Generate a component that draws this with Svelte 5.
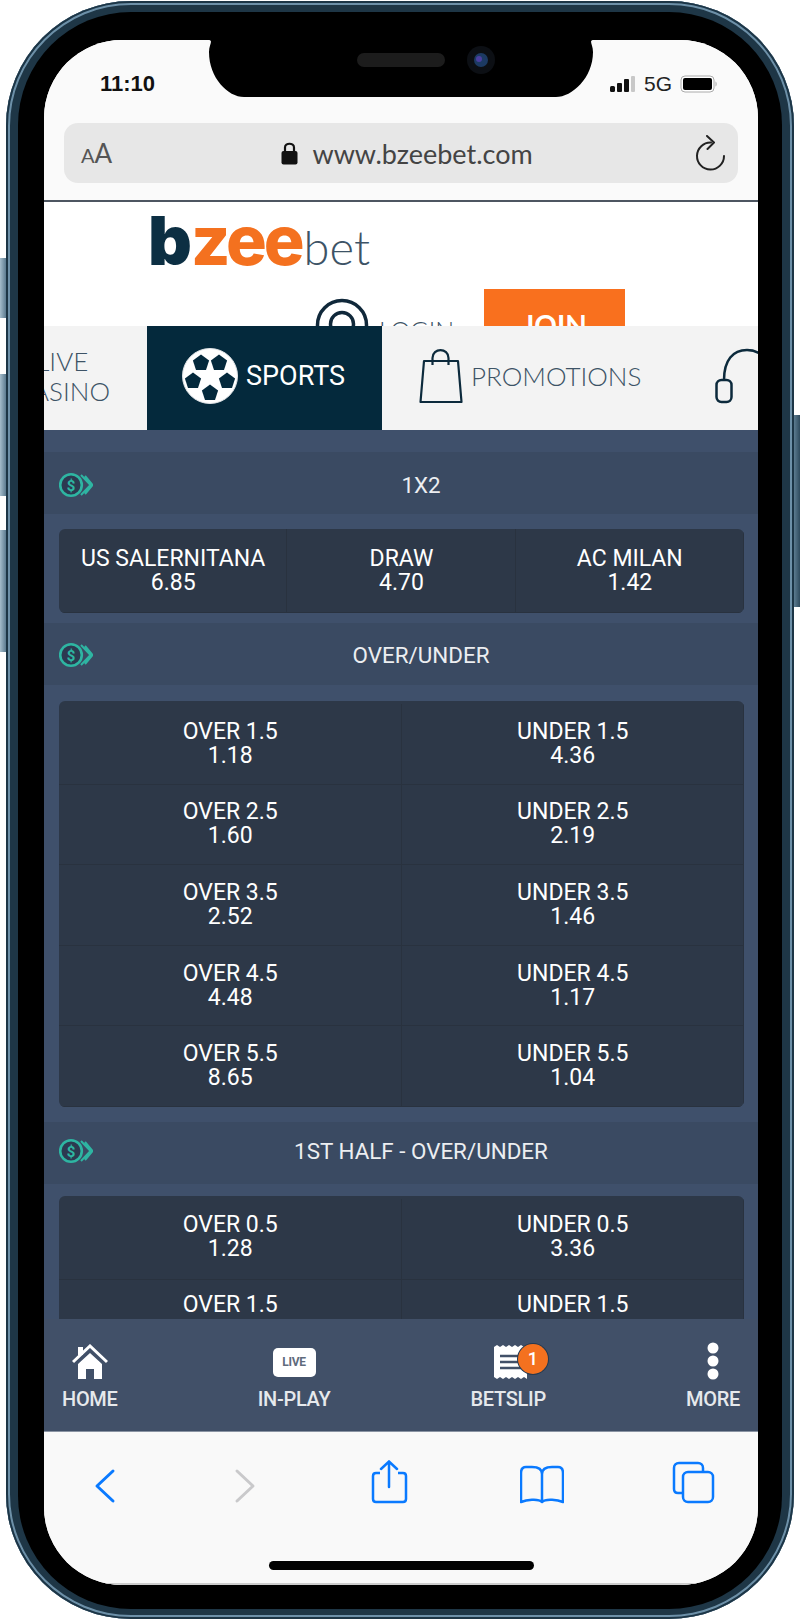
<script>
  const sections = [
    {
      title: "1X2",
      cols: 3,
      picks: [
        ["US SALERNITANA", "6.85"],
        ["DRAW", "4.70"],
        ["AC MILAN", "1.42"],
      ],
    },
    {
      title: "OVER/UNDER",
      cols: 2,
      picks: [
        ["OVER 1.5", "1.18"], ["UNDER 1.5", "4.36"],
        ["OVER 2.5", "1.60"], ["UNDER 2.5", "2.19"],
        ["OVER 3.5", "2.52"], ["UNDER 3.5", "1.46"],
        ["OVER 4.5", "4.48"], ["UNDER 4.5", "1.17"],
        ["OVER 5.5", "8.65"], ["UNDER 5.5", "1.04"],
      ],
    },
    {
      title: "1ST HALF - OVER/UNDER",
      cols: 2,
      picks: [
        ["OVER 0.5", "1.28"], ["UNDER 0.5", "3.36"],
        ["OVER 1.5", "2.05"], ["UNDER 1.5", "1.72"],
      ],
    },
  ];

  // football patches, relative to the ball centre
  const patches = [[-9, -13], [9, -13], [-17, 5], [17, 5], [0, 17]];

  function pentagon(cx, cy, r) {
    const pts = [];
    for (let i = 0; i < 5; i++) {
      const a = (-90 + i * 72) * Math.PI / 180;
      pts.push((cx + r * Math.cos(a)).toFixed(1) + "," + (cy + r * Math.sin(a)).toFixed(1));
    }
    return pts.join(" ");
  }
</script>

<div class="phone">
  <span class="side vol-mute"></span>
  <span class="side vol-up"></span>
  <span class="side vol-down"></span>
  <span class="side power"></span>

  <div class="bezel">
    <div class="screen">
      <svg class="notch" width="386" height="57" viewBox="0 0 386 57">
        <path d="M0 0H386C380 0 385 4 385 12C385 38 364 57 348 57H36C20 57 1 38 1 12C1 4 6 0 0 0Z" fill="#000" />
        <rect x="149" y="13" width="88" height="14" rx="7" fill="#1c1c1c" />
        <circle cx="273" cy="20" r="14" fill="#0c0f14" />
        <circle cx="273" cy="20" r="7" fill="#1c3a63" />
        <circle cx="271" cy="19" r="3" fill="#4a3fa0" />
      </svg>

      <div class="browser-top">
        <div class="status">
          <span class="time">11:10</span>
          <div class="status-right">
            <svg width="26" height="17" viewBox="0 0 26 17">
              <rect x="0" y="10" width="5" height="6" rx="1.5" fill="#111" />
              <rect x="7" y="7" width="5" height="9" rx="1" fill="#111" />
              <rect x="14" y="3" width="5" height="13" rx="1" fill="#111" />
              <rect x="21" y="0" width="4" height="16" rx="1" fill="#c8c8c8" />
            </svg>
            <span class="net">5G</span>
            <svg width="38" height="18" viewBox="0 0 38 18">
              <rect x="1" y="1" width="33" height="16" rx="4" fill="#fff" stroke="#aaa" />
              <rect x="3" y="3" width="29" height="12" rx="2" fill="#000" />
              <path d="M35.5 6.5C37 7 37 11 35.5 11.500Z" fill="#aaa" />
            </svg>
          </div>
        </div>
        <div class="urlbar">
          <span class="aa"><small>A</small>A</span>
          <div class="url">
            <svg width="17" height="24" viewBox="0 0 17 24">
              <path d="M4 11V6.500C4 1.500 13 1.500 13 6.500V11" fill="none" stroke="#111" stroke-width="2.200" />
              <rect x="0.500" y="10" width="16" height="13.500" rx="2" fill="#111" />
            </svg>
            <span>www.bzeebet.com</span>
          </div>
          <svg class="reload" width="32" height="38" viewBox="0 0 32 38">
            <path d="M17 7.500A13.500 13.500 0 1 0 30 21" fill="none" stroke="#222" stroke-width="2" stroke-linecap="round" />
            <path d="M13 1L20 7.500L13.500 14" fill="none" stroke="#222" stroke-width="2" stroke-linecap="round" stroke-linejoin="round" />
          </svg>
        </div>
      </div>

      <header class="site">
        <div class="logo"><b>b</b><em>zee</em><i>bet</i></div>
        <div class="actions">
          <svg class="user" width="54" height="54" viewBox="0 0 54 54">
            <circle cx="27" cy="27" r="24.500" fill="none" stroke="#10283a" stroke-width="3.500" />
            <circle cx="27" cy="26" r="11.500" fill="none" stroke="#10283a" stroke-width="3.500" />
          </svg>
          <span class="login">LOGIN</span>
          <span class="join">JOIN</span>
        </div>
      </header>

      <nav class="tabs">
        <div class="tab casino"><span>LIVE<br />CASINO</span></div>
        <div class="tab active">
          <svg width="58" height="58" viewBox="-29 -29 58 58">
            <circle r="27.500" fill="#fff" stroke="#dfe3e6" />
            {#each patches as p}
              <polygon points={pentagon(p[0], p[1], 8.500)} fill="#04293c" />
            {/each}
          </svg>
          <span>SPORTS</span>
        </div>
        <div class="tab promo">
          <svg width="44" height="56" viewBox="0 0 44 56">
            <path d="M5 13H39L42.500 54H1.500Z" fill="none" stroke="#0c2a3c" stroke-width="2.200" stroke-linejoin="round" />
            <path d="M13.500 17V10C13.500 -0.500 29.500 -0.500 29.500 10V17" fill="none" stroke="#0c2a3c" stroke-width="2.200" />
          </svg>
          <span>PROMOTIONS</span>
        </div>
        <div class="tab help">
          <svg width="60" height="56" viewBox="0 0 60 56">
            <path d="M9 32C9 12 18 2 32 2C46 2 55 12 55 32" fill="none" stroke="#0c2a3c" stroke-width="2.500" />
            <rect x="1.500" y="32" width="15" height="22" rx="5" fill="none" stroke="#0c2a3c" stroke-width="2.500" />
          </svg>
        </div>
      </nav>

      <main class="odds">
        {#each sections as s, i}
          <div class="market-head h{i}">
            <svg width="34" height="26" viewBox="0 0 34 26">
              <path d="M22 3L31.500 13L22 23M26 4L33.500 13L26 22" fill="none" stroke="#2eb5a2" stroke-width="2" />
              <circle cx="12" cy="13" r="10.800" fill="#2c3950" stroke="#2eb5a2" stroke-width="2.600" />
              <text x="12" y="18.500" text-anchor="middle" class="dollar">$</text>
            </svg>
            <span>{s.title}</span>
          </div>
          <div class="market m{i}" class:three={s.cols === 3}>
            {#each s.picks as pick}
              <div class="pick">
                <span>{pick[0]}</span>
                <span>{pick[1]}</span>
              </div>
            {/each}
          </div>
        {/each}
      </main>

      <div class="bottom-nav">
        <div class="item">
          <svg width="36" height="36" viewBox="0 0 36 36">
            <path d="M1 18L18 2L35 18" fill="none" stroke="#fff" stroke-width="3" />
            <path d="M6 20L18 9L30 20V35H22V25H14V35H6Z" fill="#fff" />
            <rect x="6" y="3" width="5" height="8" fill="#fff" />
          </svg>
          <span>HOME</span>
        </div>
        <div class="item">
          <div class="live">LIVE</div>
          <span>IN-PLAY</span>
        </div>
        <div class="item">
          <div class="slip">
            <svg width="36" height="36" viewBox="0 0 36 36">
              <path d="M1 3L4 1L7 3L10 1L13 3L16 1L19 3L22 1L25 3L28 1L31 3L34 1V35L31 33L28 35L25 33L22 35L19 33L16 35L13 33L10 35L7 33L4 35L1 33Z" fill="#fff" />
              <path d="M7 12H28M7 18H28M7 24H28" stroke="#415068" stroke-width="2.500" />
            </svg>
            <span class="badge">1</span>
          </div>
          <span>BETSLIP</span>
        </div>
        <div class="item">
          <svg width="14" height="38" viewBox="0 0 14 38">
            <circle cx="7" cy="6" r="5.500" fill="#fff" />
            <circle cx="7" cy="19" r="5.500" fill="#fff" />
            <circle cx="7" cy="32" r="5.500" fill="#fff" />
          </svg>
          <span>MORE</span>
        </div>
      </div>

      <div class="browser-bottom">
        <div class="tools">
          <svg width="44" height="44" viewBox="0 0 44 44">
            <path d="M30 11L14 26L30 41" fill="none" stroke="#0a7aff" stroke-width="3" stroke-linecap="round" stroke-linejoin="round" />
          </svg>
          <svg width="44" height="44" viewBox="0 0 44 44">
            <path d="M14 11L30 26L14 41" fill="none" stroke="#c9c9cb" stroke-width="3" stroke-linecap="round" stroke-linejoin="round" />
          </svg>
          <svg width="44" height="44" viewBox="0 0 44 44">
            <path d="M13 13H9C7 13 6 14 6 16V39C6 41 7 42 9 42H36C38 42 39 41 39 39V16C39 14 38 13 36 13H31" fill="none" stroke="#0a7aff" stroke-width="2.500" />
            <path d="M22 27V2M14 9L22 1.500L30 9" fill="none" stroke="#0a7aff" stroke-width="2.500" stroke-linecap="round" />
          </svg>
          <svg width="44" height="44" viewBox="0 0 44 44">
            <path d="M22 42C18 38 6 40 1 42V13C1 9 3 7 6 7H12C18 7 22 9 22 14V42C26 38 38 40 43 42V13C43 9 41 7 38 7H32C26 7 22 9 22 14" fill="none" stroke="#0a7aff" stroke-width="2.500" stroke-linejoin="round" />
          </svg>
          <svg width="44" height="44" viewBox="0 0 44 44">
            <rect x="11" y="12" width="30" height="30" rx="5" fill="none" stroke="#0a7aff" stroke-width="2.500" />
            <path d="M11 33H6C3 33 2 31 2 29V8C2 5 4 3 7 3H26C29 3 31 5 31 8V12" fill="none" stroke="#0a7aff" stroke-width="2.500" />
          </svg>
        </div>
        <div class="home-bar"></div>
      </div>
    </div>
  </div>
</div>

<style>
  :global(body) {
    background: #fff;
  }

  .phone {
    position: relative;
    box-sizing: border-box;
    width: 788px;
    height: 1618px;
    margin: 1px 6px;
    padding: 11px 12px 10px;
    border-radius: 125px;
    background: #1e3646;
    box-shadow: inset 0 0 0 2px #1c3546, inset 0 0 0 4px #6d90a8;
  }

  .side {
    position: absolute;
    width: 6px;
    background: linear-gradient(90deg, #a4bccb, #5c7b90);
  }
  .vol-mute { left: -6px; top: 257px; height: 60px; }
  .vol-up { left: -6px; top: 373px; height: 122px; }
  .vol-down { left: -6px; top: 529px; height: 122px; }
  .power { right: -6px; top: 414px; height: 192px; background: linear-gradient(90deg, #5c7b90, #2f4b5e); }

  .bezel {
    box-sizing: border-box;
    height: 100%;
    padding: 28px 24px 24px 26px;
    border-radius: 113px;
    background: #000;
  }

  .screen {
    position: relative;
    display: flex;
    flex-direction: column;
    width: 714px;
    height: 1545px;
    overflow: hidden;
    border-radius: 78px;
    background: #fff;
    font-family: Roboto, sans-serif;
  }

  .notch {
    position: absolute;
    left: 164px;
    top: 0;
    z-index: 3;
  }

  .browser-top {
    flex: none;
    box-sizing: border-box;
    height: 162px;
    padding: 0 20px;
    background: #fafafa;
    border-bottom: 2px solid #4d5661;
  }

  .status {
    display: flex;
    align-items: center;
    justify-content: space-between;
    height: 83px;
    padding: 5px 20px 0 36px;
    box-sizing: border-box;
  }

  .time {
    font: bold 22px "Liberation Sans", sans-serif;
    color: #111;
  }

  .status-right {
    display: flex;
    align-items: center;
    gap: 8px;
  }

  .net {
    font: 21px "Liberation Sans", sans-serif;
    color: #222;
  }

  .urlbar {
    display: flex;
    align-items: center;
    height: 60px;
    padding: 0 12px 0 17px;
    border-radius: 14px;
    background: #e7e7e7;
  }

  .aa {
    font: 26px Lato, sans-serif;
    color: #555;
  }
  .aa small {
    font-size: 20px;
  }

  .url {
    flex: 1;
    display: flex;
    align-items: center;
    justify-content: center;
    gap: 14px;
    padding-left: 8px;
    font: 27px Lato, sans-serif;
    color: #444;
  }

  .reload {
    margin-top: 2px;
  }

  .site {
    flex: none;
    height: 124px;
    background: #fff;
  }

  .logo {
    display: flex;
    align-items: baseline;
    height: 60px;
    margin: 8px 0 0 104px;
    line-height: 60px;
    font-family: Inter, sans-serif;
    font-size: 68px;
    letter-spacing: -3px;
  }
  .logo b {
    font-weight: 900;
    margin-right: 2px;
    color: #0c2f43;
  }
  .logo em {
    font-style: normal;
    font-weight: 800;
    color: #f4711f;
  }
  .logo i {
    font-style: normal;
    margin-left: 2px;
    font-family: Lato, sans-serif;
    font-size: 47px;
    font-weight: 300;
    letter-spacing: 0;
    color: #3d5366;
  }

  /* the row runs under the tabs, only its top shows */
  .actions {
    display: flex;
    align-items: flex-start;
    height: 37px;
    overflow: hidden;
    margin: 19px 0 0 271px;
  }

  .user {
    margin-top: 9px;
  }

  .login {
    width: 105px;
    margin: 26px 0 0 10px;
    font: 300 25px Lato, sans-serif;
    color: #3d5366;
  }

  .join {
    width: 141px;
    height: 80px;
    padding-top: 19px;
    box-sizing: border-box;
    text-align: center;
    background: #f9701e;
    color: #fff;
    font: bold 28px Lato, sans-serif;
  }

  .tabs {
    flex: none;
    display: flex;
    height: 104px;
    overflow: hidden;
    background: #f3f3f3;
    font: 300 26px/30px Lato, sans-serif;
    color: #3d5366;
  }

  .tab {
    flex: none;
    display: flex;
    align-items: center;
    box-sizing: border-box;
    padding-bottom: 4px;
  }

  .casino {
    width: 103px;
    justify-content: flex-end;
    padding-right: 37px;
    text-align: center;
  }

  .active {
    width: 235px;
    padding-left: 34px;
    gap: 7px;
    background: #04293c;
    color: #fff;
    font: 27px Roboto, sans-serif;
  }

  .promo {
    padding-left: 37px;
    gap: 8px;
  }

  .help {
    padding-left: 74px;
  }

  .odds {
    flex: 1;
    min-height: 0;
    overflow: hidden;
    padding-top: 22px;
    background: #3f506b;
    color: #fff;
    font-size: 23px;
    line-height: 24px;
  }

  .market-head {
    display: flex;
    align-items: center;
    box-sizing: border-box;
    height: 62px;
    padding-left: 15px;
    background: #3a4a62;
    font-size: 22.400px;
    color: #eceef1;
  }
  .market-head span {
    flex: 1;
    text-align: center;
    padding-right: 9px;
  }
  .market-head.h0 {
    padding-top: 4px;
  }
  .market-head.h1 {
    padding-top: 1px;
  }
  .market-head.h2 {
    padding-bottom: 3px;
  }

  .dollar {
    font: bold 15px Roboto, sans-serif;
    fill: #2eb5a2;
  }

  .market {
    display: grid;
    grid-template-columns: 1fr 1fr;
    padding-top: 3px;
    border-radius: 6px;
    overflow: hidden;
    background: #2d3848;
  }
  .market.three {
    grid-template-columns: 1fr 1fr 1fr;
    padding-top: 0;
  }
  .m0 { margin: 15px 14px 10px 15px; }
  .m1 { margin: 16px 14px 15px 15px; }
  .m2 { margin: 12px 14px 0 15px; }

  .pick {
    display: flex;
    flex-direction: column;
    align-items: center;
    justify-content: center;
    box-sizing: border-box;
    height: 80.600px;
    padding-bottom: 1px;
    box-shadow: inset -1px -1px 0 #29323f;
  }
  .market.three .pick {
    height: 84px;
    padding-bottom: 0;
  }
  .m2 .pick {
    padding-bottom: 5px;
  }

  .bottom-nav {
    flex: none;
    display: flex;
    justify-content: space-between;
    height: 113px;
    padding: 0 18px;
    box-sizing: border-box;
    background: #415068;
    border-bottom: 1px solid #8a94a3;
  }

  .item {
    position: relative;
    display: flex;
    flex-direction: column;
    align-items: center;
    justify-content: flex-end;
    padding-bottom: 21px;
    gap: 8px;
    font-size: 20px;
    font-weight: 500;
    line-height: 22px;
    letter-spacing: -0.3px;
    color: #e6e9ec;
  }

  .live {
    box-sizing: border-box;
    width: 43px;
    height: 29px;
    margin-bottom: 3px;
    border-radius: 5px;
    background: #fff;
    color: #5f6b7c;
    font-size: 12px;
    font-weight: 700;
    line-height: 29px;
    text-align: center;
  }

  .slip {
    position: relative;
    height: 36px;
    margin-left: 5px;
  }

  .badge {
    position: absolute;
    left: 25px;
    top: 0;
    width: 30px;
    height: 30px;
    border-radius: 50%;
    background: #f4711f;
    box-shadow: 0 0 0 1px #263a50;
    color: #fff;
    font-size: 18px;
    line-height: 30px;
    text-align: center;
  }

  .browser-bottom {
    flex: none;
    height: 153px;
    box-sizing: border-box;
    padding-top: 28px;
    background: #f9f9f9;
    border-bottom: 2px solid #ccc;
  }

  .tools {
    display: grid;
    grid-template-columns: 140px 144px 153px 152px 44px;
    padding-left: 39px;
  }

  .home-bar {
    width: 265px;
    height: 9px;
    margin: 57px 0 0 225px;
    border-radius: 5px;
    background: #000;
  }
</style>
